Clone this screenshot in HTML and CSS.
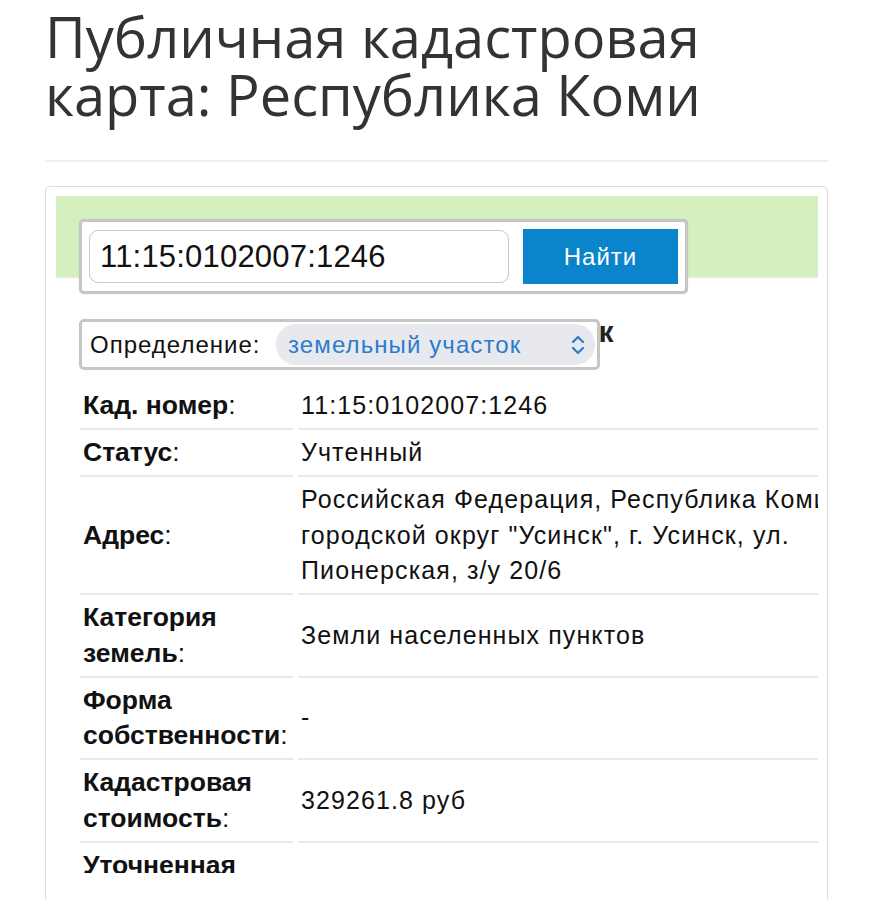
FILE: index.html
```html
<!DOCTYPE html>
<html lang="ru">
<head>
<meta charset="utf-8">
<title>Публичная кадастровая карта: Республика Коми</title>
<link rel="stylesheet" href="styles.css">
</head>
<body>
<div class="page">
  <h1 class="title">Публичная кадастровая карта: Республика Коми</h1>
  <hr class="rule">
  <div class="card">
    <div class="viewport">
      <div class="band"></div>
      <form class="search">
        <input class="search-input" type="text" value="11:15:0102007:1246">
        <button class="search-btn" type="button">Найти</button>
      </form>
      <div class="kind">
        <span class="kind-label">Определение:</span>
        <div class="kind-select">
          <span>земельный участок</span>
          <svg class="chev" width="14" height="22" viewBox="0 0 14 22"><path d="M2 8 L7 3 L12 8 M2 14 L7 19 L12 14" fill="none" stroke="#2c7ccb" stroke-width="2.2" stroke-linecap="round" stroke-linejoin="round"/></svg>
        </div>
      </div>
      <div class="details">
        <h3 class="details-title">Земельный участок</h3>
        <table class="props">
          <colgroup><col class="col-k"><col class="col-v"></colgroup>
          <tr><td class="k"><b>Кад. номер</b>:</td><td class="v">11:15:0102007:1246</td></tr>
          <tr><td class="k"><b>Статус</b>:</td><td class="v">Учтенный</td></tr>
          <tr><td class="k"><b>Адрес</b>:</td><td class="v">Российская Федерация, Республика Коми, городской округ "Усинск", г. Усинск, ул. Пионерская, з/у 20/6</td></tr>
          <tr><td class="k"><b>Категория земель</b>:</td><td class="v">Земли населенных пунктов</td></tr>
          <tr><td class="k"><b>Форма собственности</b>:</td><td class="v">-</td></tr>
          <tr><td class="k"><b>Кадастровая стоимость</b>:</td><td class="v">329261.8 руб</td></tr>
          <tr><td class="k"><b>Уточненная площадь</b>:</td><td class="v">-</td></tr>
        </table>
      </div>
    </div>
  </div>
</div>
</body>
</html>
```
FILE: styles.css
```css
html, body {
  margin: 0;
  padding: 0;
  background: #fff;
}
body {
  font-family: "Liberation Sans", Arial, sans-serif;
  color: #111;
}
.page {
  padding: 0 45px;
}
.title {
  margin: 0;
  padding-top: 7px;
  font-family: "Open Sans", "Noto Sans", sans-serif;
  font-weight: 400;
  font-size: 56px;
  line-height: 58px;
  color: #333;
}
.rule {
  margin: 37px 0 0;
  border: 0;
  border-top: 2px solid #eeeeee;
  height: 0;
}
.card {
  margin-top: 24px;
  border: 1px solid #dcdcdc;
  border-radius: 5px;
  padding: 9px 9px 40px 10px;
}
.viewport {
  position: relative;
  height: 677px;
  overflow: hidden;
}
.band {
  height: 81px;
  background: #d4f0bf;
  box-shadow: 0 1px 1px rgba(0, 0, 0, 0.08);
}
.search {
  position: absolute;
  top: 23px;
  left: 23px;
  width: 609px;
  height: 75px;
  box-sizing: border-box;
  margin: 0;
  border: 3px solid #c6c6c6;
  border-radius: 5px;
  background: #fff;
  display: flex;
  align-items: center;
  gap: 14px;
  padding: 0 7px;
  box-shadow: 0 0 1px rgba(0, 0, 0, 0.2);
}
.search-input {
  width: 420px;
  height: 53px;
  box-sizing: border-box;
  border: 1px solid #c8c8c8;
  border-radius: 9px;
  padding: 0 0 0 10px;
  font-family: "Liberation Sans", Arial, sans-serif;
  font-size: 31px;
  letter-spacing: 0.2px;
  color: #111;
  background: #fff;
  outline: none;
}
.search-btn {
  width: 155px;
  height: 55px;
  border: 0;
  border-radius: 0;
  background: #0a85cb;
  color: #fff;
  font-family: "Liberation Sans", Arial, sans-serif;
  font-size: 24px;
  letter-spacing: 1px;
  padding: 0;
}
.kind {
  position: absolute;
  top: 123px;
  left: 23px;
  width: 521px;
  height: 51px;
  box-sizing: border-box;
  border: 3px solid #c6c6c6;
  border-radius: 5px;
  background: #fff;
  display: flex;
  align-items: center;
  padding: 0 2px 0 8px;
}
.kind-label {
  font-size: 24px;
  letter-spacing: 1px;
  color: #111;
}
.kind-select {
  margin-left: auto;
  width: 319px;
  height: 41px;
  box-sizing: border-box;
  border-radius: 20px;
  background: #e8e9ee;
  display: flex;
  align-items: center;
  justify-content: space-between;
  padding: 0 10px 0 12px;
  color: #2c7ccb;
  font-size: 24px;
  letter-spacing: 1.1px;
}
.chev {
  display: block;
}
.details {
  width: 780px;
  margin-left: 19px;
}
.details-title {
  margin: 35px 0 0;
  text-align: center;
  font-size: 30px;
  line-height: 40px;
  font-weight: 700;
  color: #222;
}
.props {
  margin-top: 31px;
  width: 780px;
  table-layout: fixed;
  border-collapse: separate;
  border-spacing: 5px 0;
  font-size: 25px;
  line-height: 35.5px;
  color: #111;
}
.col-k { width: 213px; }
.col-v { width: 552px; }
.props td {
  padding: 5px 3px 4.5px;
  border-bottom: 2px solid #e9e9e9;
  vertical-align: middle;
}
.props .k {
  font-size: 26.5px;
  padding-left: 3px;
  padding-right: 0;
}
.props .k b {
  font-weight: 700;
}
.props .v {
  letter-spacing: 1.1px;
}
```
